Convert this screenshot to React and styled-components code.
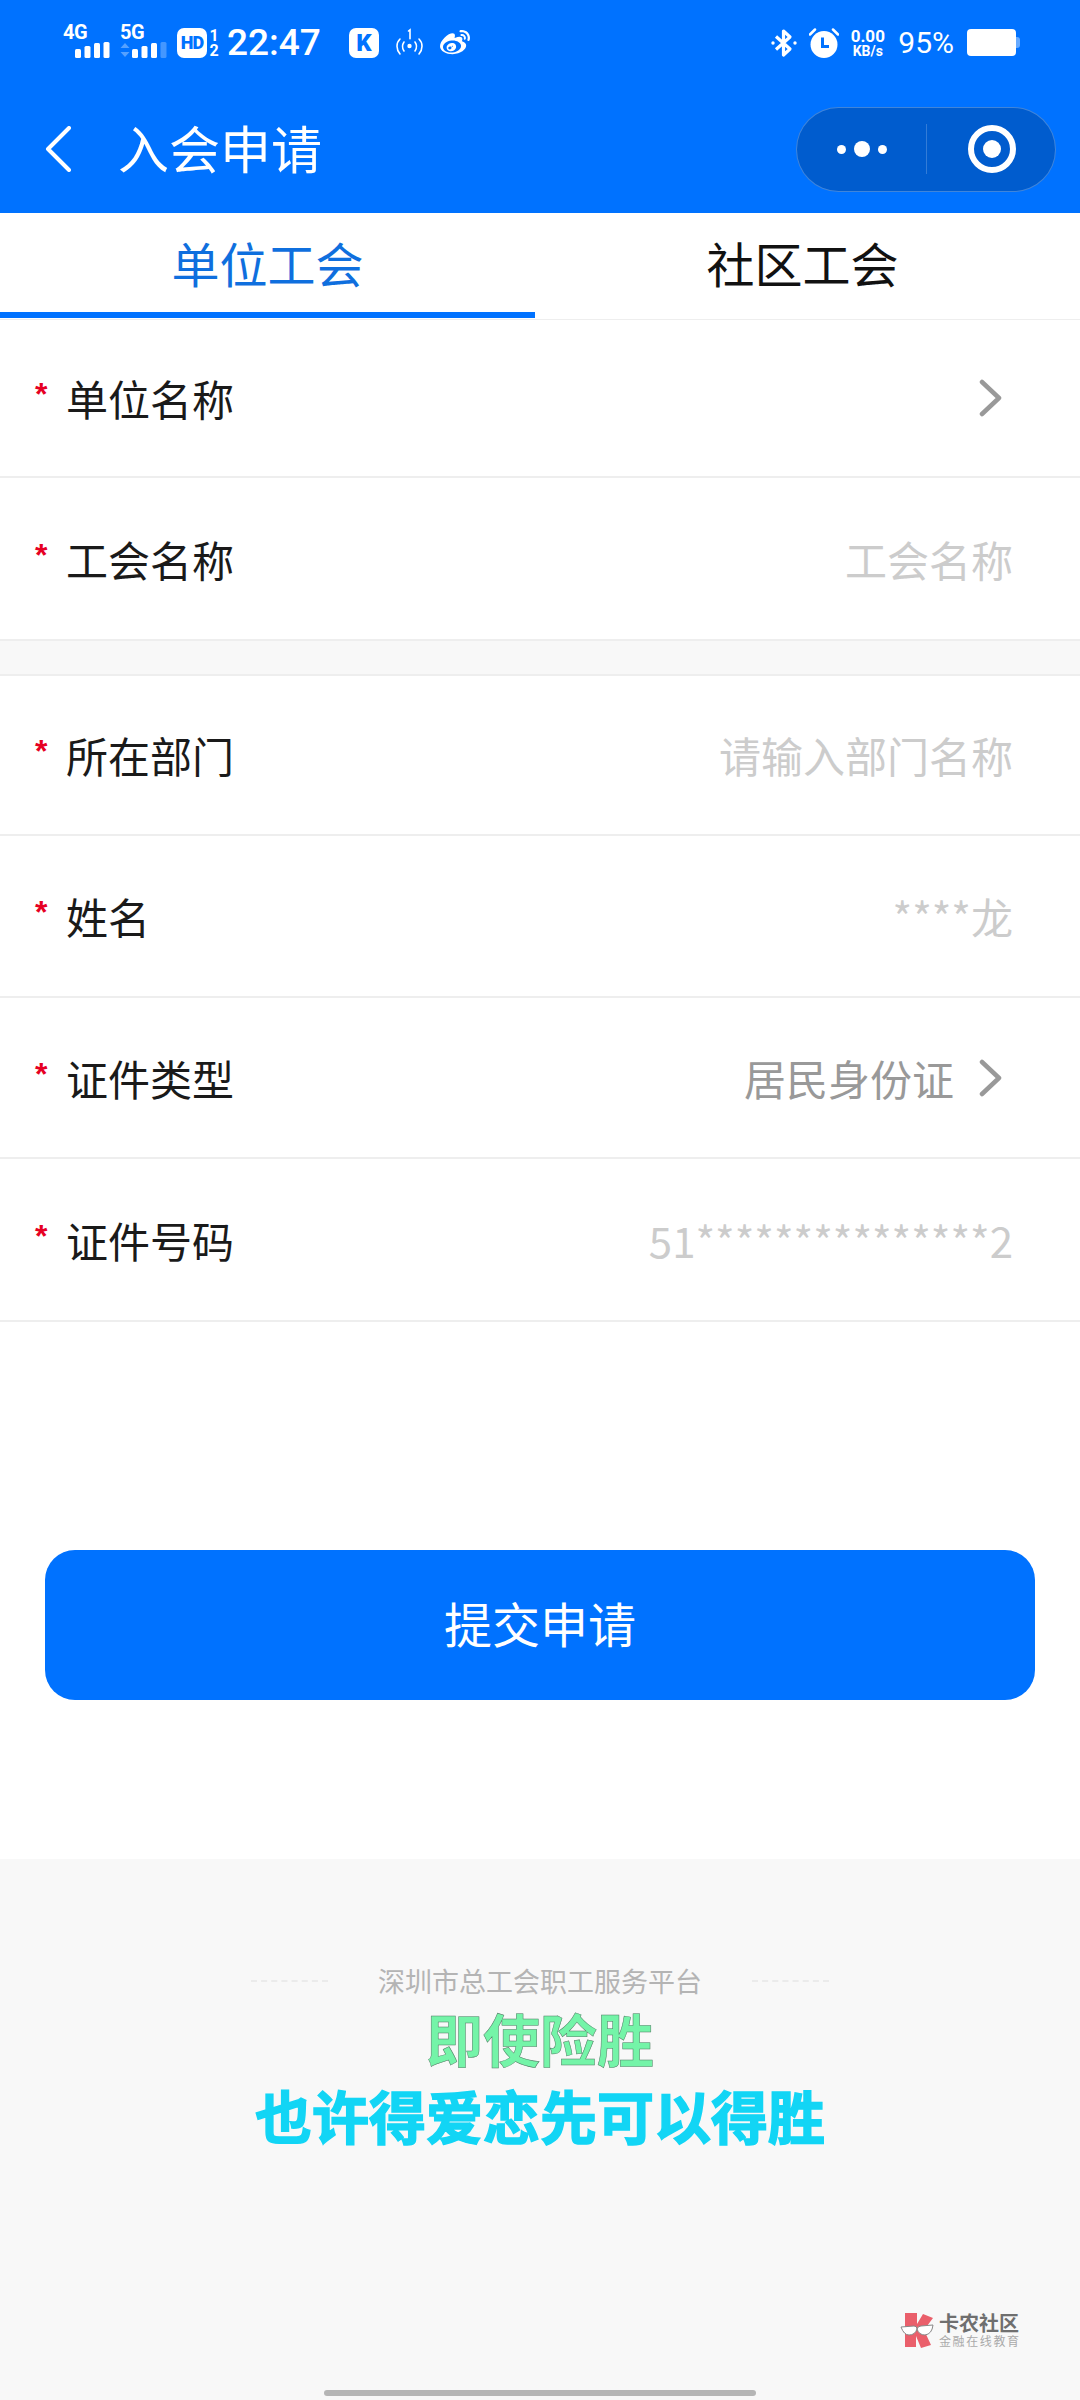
import styled, { createGlobalStyle } from 'styled-components';
import { FaWeibo } from 'react-icons/fa';

const GlobalStyle = createGlobalStyle`
  html, body {
    margin: 0;
    padding: 0;
    background: #fff;
  }
  * {
    box-sizing: border-box;
  }
`;

const Page = styled.div`
  width: 1080px;
  height: 2400px;
  position: relative;
  overflow: hidden;
  display: flex;
  flex-direction: column;
  background: #fff;
  font-family: 'Noto Sans CJK SC', 'Noto Sans', sans-serif;
`;

const Header = styled.header`
  background: #0072ff;
  height: 213px;
  flex: none;
  color: #fff;
`;

const StatusBar = styled.div`
  height: 85px;
  padding: 0 64px 0 63px;
  display: flex;
  align-items: center;
  font-family: Roboto, sans-serif;
`;

const StatusItem = styled.div`
  margin-left: ${(p) => p.$gap || 0}px;
  margin-right: ${(p) => (p.$push ? 'auto' : '0')};
  display: flex;
  align-items: center;
  flex: none;
`;

const NetworkLabel = styled.div`
  position: relative;
  width: 47px;
  height: 32px;
  margin-top: -2px;
`;

const NetworkName = styled.span`
  position: absolute;
  left: 0;
  top: -4px;
  font-size: 20px;
  font-weight: 700;
  line-height: 20px;
  letter-spacing: -0.5px;
`;

const HdBadge = styled.span`
  width: 30px;
  height: 30px;
  border-radius: 7px;
  background: #fff;
  color: #0072ff;
  font-size: 18px;
  font-weight: 900;
  letter-spacing: -1px;
  display: flex;
  align-items: center;
  justify-content: center;
`;

const SimSlots = styled.span`
  margin-left: 2px;
  width: 10px;
  font-size: 16px;
  font-weight: 700;
  line-height: 15px;
  text-align: center;
`;

const Clock = styled.span`
  font-size: 37px;
  font-weight: 500;
  line-height: 40px;
`;

const KBadge = styled.span`
  width: 30px;
  height: 30px;
  border-radius: 7px;
  background: #fff;
  color: #0072ff;
  font-size: 24px;
  font-weight: 900;
  display: flex;
  align-items: center;
  justify-content: center;
`;

const NetSpeed = styled.div`
  width: 35px;
  font-size: 14px;
  font-weight: 700;
  line-height: 14px;
  text-align: center;
  white-space: nowrap;
`;

const NetSpeedValue = styled.div`
  font-size: 17px;
  line-height: 16px;
`;

const BatteryPercent = styled.span`
  font-size: 30px;
  line-height: 34px;
`;

const Battery = styled.div`
  width: 49px;
  height: 27px;
  border-radius: 4px;
  background: #fff;
  position: relative;

  &::after {
    content: '';
    position: absolute;
    right: -4px;
    top: 8px;
    width: 4px;
    height: 11px;
    border-radius: 0 3px 3px 0;
    background: #ffffff66;
  }
`;

const NavBar = styled.div`
  height: 128px;
  padding: 0 24px 0 45px;
  display: flex;
  align-items: center;
`;

const NavTitle = styled.h1`
  margin: -4px 0 0 47px;
  font-size: 51px;
  font-weight: 400;
  line-height: 60px;
  flex: 1;
`;

const Capsule = styled.div`
  width: 260px;
  height: 85px;
  border-radius: 43px;
  border: 1.5px solid #ffffff40;
  background: #005cce;
  display: flex;
  align-items: center;
`;

const CapsuleMenu = styled.div`
  width: 129px;
  display: flex;
  justify-content: center;
  align-items: center;
  gap: 8px;
`;

const MenuDot = styled.span`
  width: ${(p) => (p.$big ? 16 : 9)}px;
  height: ${(p) => (p.$big ? 16 : 9)}px;
  border-radius: 50%;
  background: #fff;
`;

const CapsuleDivider = styled.span`
  width: 1px;
  height: 50px;
  background: #ffffff33;
`;

const CapsuleClose = styled.div`
  flex: 1;
  display: flex;
  justify-content: center;
  padding-left: 2px;
`;

const CloseRing = styled.span`
  width: 48px;
  height: 48px;
  border-radius: 50%;
  border: 6px solid #fff;
  display: flex;
  align-items: center;
  justify-content: center;

  &::after {
    content: '';
    width: 18px;
    height: 18px;
    border-radius: 50%;
    background: #fff;
  }
`;

const Tabs = styled.div`
  height: 107px;
  flex: none;
  display: grid;
  grid-template-columns: 535px 535px;
  border-bottom: 1.5px solid #eee;
`;

const Tab = styled.div`
  height: 105px;
  padding-bottom: 2px;
  display: flex;
  align-items: center;
  justify-content: center;
  font-size: 48px;
  color: ${(p) => (p.$active ? '#0f6fde' : '#111')};
  border-bottom: 6px solid ${(p) => (p.$active ? '#0072ff' : 'transparent')};
`;

const Row = styled.div`
  height: ${(p) => p.$height || 161}px;
  flex: none;
  padding: 0 67px 0 66px;
  position: relative;
  display: flex;
  align-items: center;
  justify-content: space-between;
  border-bottom: 2px solid #eeeeee;
`;

const Star = styled.span`
  position: absolute;
  left: 35px;
  top: 50%;
  margin-top: -22px;
  color: #e60023;
  font-size: 32px;
  font-weight: 700;
  line-height: 36px;
  font-family: 'Liberation Sans', sans-serif;
`;

const Label = styled.span`
  font-size: 42px;
  line-height: 50px;
  color: #1a1a1a;
`;

const ValueBox = styled.div`
  display: flex;
  align-items: center;
`;

const Value = styled.span`
  font-size: 42px;
  line-height: 50px;
  color: ${(p) => (p.$filled ? '#999' : '#ccc')};
`;

const Chevron = styled.svg`
  width: 24px;
  height: 38px;
  margin-left: 24px;
  margin-right: 11px;
`;

const SectionGap = styled.div`
  height: 35px;
  flex: none;
  background: #f8f8f8;
  border-bottom: 2px solid #eeeeee;
`;

const SubmitWrap = styled.div`
  flex: 1;
  padding: 228px 45px 0;
`;

const SubmitButton = styled.button`
  width: 990px;
  height: 150px;
  padding: 0 0 6px;
  border: none;
  border-radius: 30px;
  background: #0072ff;
  color: #fff;
  font-family: inherit;
  font-size: 48px;
`;

const Footer = styled.footer`
  height: 541px;
  flex: none;
  background: #f8f8f8;
  padding-top: 104px;
  display: flex;
  flex-direction: column;
  align-items: center;
`;

const FooterTitle = styled.div`
  display: flex;
  align-items: center;
  gap: 50px;
  height: 36px;
  font-size: 27px;
  line-height: 36px;
  color: #b4b4b4;
  white-space: nowrap;
`;

const FooterDash = styled.span`
  width: 77px;
  border-top: 2px dashed #ebebeb;
`;

const Slogan = styled.div`
  font-size: 57px;
  font-weight: 700;
  line-height: 77px;
  color: ${(p) => p.$color};
  -webkit-text-stroke: ${(p) => (p.$outline ? '0.5px #4f7a62' : '1.5px #12d5f5')};
`;

const Watermark = styled.div`
  position: absolute;
  left: 900px;
  top: 2312px;
  display: flex;
  align-items: center;
  gap: 5px;
`;

const WatermarkText = styled.div`
  display: flex;
  flex-direction: column;
`;

const WatermarkName = styled.span`
  font-size: 20px;
  font-weight: 700;
  line-height: 20px;
  color: #6f6f6f;
`;

const WatermarkSub = styled.span`
  font-size: 12px;
  line-height: 15px;
  letter-spacing: 1.6px;
  color: #aaa;
  white-space: nowrap;
`;

const HomeBar = styled.div`
  position: absolute;
  left: 324px;
  top: 2390px;
  width: 432px;
  height: 6px;
  border-radius: 3px;
  background: #b5b5b5;
`;

function Bars({ arrows, dimLast }) {
  const heights = [9, 12, 15, 16];
  return (
    <svg width="47" height="16" viewBox="0 0 47 16" style={{ position: 'absolute', left: 0, top: 16 }}>
      {arrows && <path d="M5 1l4.500 5h-9zM5 15l4.500-5h-9z" fill="#ffffff55" />}
      {heights.map((h, i) => (
        <rect
          key={i}
          x={12 + i * 9.5}
          y={16 - h}
          width="6"
          height={h}
          rx="1.5"
          fill={dimLast && i === 3 ? '#ffffff44' : '#fff'}
        />
      ))}
    </svg>
  );
}

function BluetoothIcon() {
  return (
    <svg width="26" height="30" viewBox="0 0 26 30" fill="none" stroke="#fff" strokeWidth="3.2">
      <path d="M5 8.500l14 12.500-6.500 6V3l6.500 6L5 21.500" strokeLinejoin="round" />
      <circle cx="2" cy="15" r="1.700" fill="#fff" stroke="none" />
      <circle cx="24" cy="15" r="1.700" fill="#fff" stroke="none" />
    </svg>
  );
}

function AlarmIcon() {
  return (
    <svg width="30" height="30" viewBox="0 0 30 30">
      <circle cx="15" cy="16.500" r="13.500" fill="#fff" />
      <path d="M1 6.500L6 1.500M29 6.500L24 1.500" stroke="#fff" strokeWidth="2.500" strokeLinecap="round" />
      <path d="M13.500 9.500v9h6.500" stroke="#0072ff" strokeWidth="3" fill="none" />
    </svg>
  );
}

function HotspotIcon() {
  return (
    <svg width="31" height="30" viewBox="0 0 31 30" fill="none" stroke="#fff" strokeWidth="1.6" strokeLinecap="round">
      <path d="M6 11c-4 4-4 10 0 15M25 11c4 4 4 10 0 15M10 14c-2 3-2 6 0 9M21 14c2 3 2 6 0 9" />
      <circle cx="15.500" cy="18" r="2.200" fill="#fff" stroke="none" />
      <path d="M14.500 3l1.500-1.200v9" />
    </svg>
  );
}

function ChevronIcon() {
  return (
    <Chevron viewBox="0 0 24 38" fill="none" stroke="#999" strokeWidth="4.500" strokeLinecap="round" strokeLinejoin="round">
      <path d="M4 3l17 16L4 35" />
    </Chevron>
  );
}

function WatermarkLogo() {
  return (
    <svg width="34" height="36" viewBox="0 0 34 36">
      <path d="M5 1h12v11l6-10 10 4-9 12 7 15-10 3-5-12v11H5z" fill="#ea5f6b" />
      <path d="M1 15l13-1q3 0 3 3-2 6-8 6-5 0-8-8zM17 17q1-3 4-3l12-1q-1 9-8 10-6 0-8-6z" fill="#fff" stroke="#888" strokeWidth="1" />
    </svg>
  );
}

const rows = [
  { label: '所在部门', value: '请输入部门名称', height: 160 },
  { label: '姓名', value: '****龙', height: 162 },
  { label: '证件类型', value: '居民身份证', filled: true, chevron: true },
  { label: '证件号码', value: '51***************2', height: 163 },
];

function FormRow({ label, value, filled, chevron, height }) {
  return (
    <Row $height={height}>
      <Star>*</Star>
      <Label>{label}</Label>
      <ValueBox>
        {value && <Value $filled={filled}>{value}</Value>}
        {chevron && <ChevronIcon />}
      </ValueBox>
    </Row>
  );
}

export default function App() {
  return (
    <Page>
      <GlobalStyle />
      <Header>
        <StatusBar>
          <StatusItem>
            <NetworkLabel>
              <NetworkName>4G</NetworkName>
              <Bars />
            </NetworkLabel>
          </StatusItem>
          <StatusItem $gap={10}>
            <NetworkLabel>
              <NetworkName>5G</NetworkName>
              <Bars arrows dimLast />
            </NetworkLabel>
          </StatusItem>
          <StatusItem $gap={10}>
            <HdBadge>HD</HdBadge>
            <SimSlots>1<br />2</SimSlots>
          </StatusItem>
          <StatusItem $gap={8}>
            <Clock>22:47</Clock>
          </StatusItem>
          <StatusItem $gap={28}>
            <KBadge>K</KBadge>
          </StatusItem>
          <StatusItem $gap={15}>
            <HotspotIcon />
          </StatusItem>
          <StatusItem $gap={15} $push>
            <FaWeibo size={30} />
          </StatusItem>
          <StatusItem>
            <BluetoothIcon />
          </StatusItem>
          <StatusItem $gap={12}>
            <AlarmIcon />
          </StatusItem>
          <StatusItem $gap={11}>
            <NetSpeed>
              <NetSpeedValue>0.00</NetSpeedValue>
              KB/s
            </NetSpeed>
          </StatusItem>
          <StatusItem $gap={13}>
            <BatteryPercent>95%</BatteryPercent>
          </StatusItem>
          <StatusItem $gap={13}>
            <Battery />
          </StatusItem>
        </StatusBar>
        <NavBar>
          <svg width="26" height="46" viewBox="0 0 26 46" fill="none" stroke="#fff" strokeWidth="4" strokeLinecap="round" strokeLinejoin="round">
            <path d="M24 2L3 23l21 21" />
          </svg>
          <NavTitle>入会申请</NavTitle>
          <Capsule>
            <CapsuleMenu>
              <MenuDot />
              <MenuDot $big />
              <MenuDot />
            </CapsuleMenu>
            <CapsuleDivider />
            <CapsuleClose>
              <CloseRing />
            </CapsuleClose>
          </Capsule>
        </NavBar>
      </Header>

      <Tabs>
        <Tab $active>单位工会</Tab>
        <Tab>社区工会</Tab>
      </Tabs>

      <FormRow label="单位名称" chevron height={158} />
      <FormRow label="工会名称" value="工会名称" height={163} />
      <SectionGap />
      {rows.map((row) => (
        <FormRow key={row.label} {...row} />
      ))}

      <SubmitWrap>
        <SubmitButton>提交申请</SubmitButton>
      </SubmitWrap>

      <Footer>
        <FooterTitle>
          <FooterDash />
          深圳市总工会职工服务平台
          <FooterDash />
        </FooterTitle>
        <Slogan $color="#74f4a8" $outline>即使险胜</Slogan>
        <Slogan $color="#12d5f5">也许得爱恋先可以得胜</Slogan>
      </Footer>

      <Watermark>
        <WatermarkLogo />
        <WatermarkText>
          <WatermarkName>卡农社区</WatermarkName>
          <WatermarkSub>金融在线教育</WatermarkSub>
        </WatermarkText>
      </Watermark>
      <HomeBar />
    </Page>
  );
}
